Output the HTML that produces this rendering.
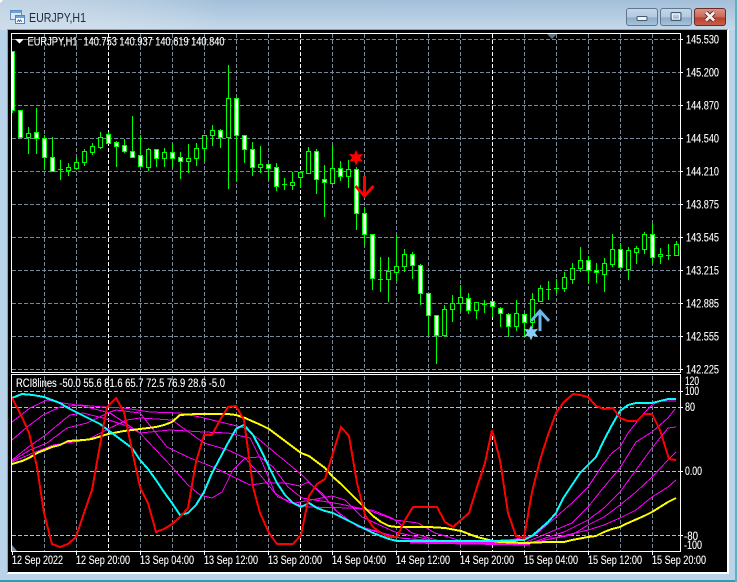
<!DOCTYPE html>
<html><head><meta charset="utf-8"><title>EURJPY,H1</title>
<style>
html,body{margin:0;padding:0;width:737px;height:582px;overflow:hidden;background:#b9d4ea}
svg{display:block}
text{font-family:"Liberation Sans",sans-serif;font-size:11.5px;fill:#fff;stroke:#fff;stroke-width:.12px}
</style></head><body>
<svg width="737" height="582" viewBox="0 0 737 582" xmlns="http://www.w3.org/2000/svg">
<defs>
<linearGradient id="tb" x1="0" y1="0" x2="0" y2="1"><stop offset="0" stop-color="#a3bfd9"/><stop offset="1" stop-color="#c4d8ea"/></linearGradient>
<linearGradient id="tb2" x1="0" y1="0" x2="1" y2="0"><stop offset="0" stop-color="#d4e0ea" stop-opacity=".6"/><stop offset=".3" stop-color="#fff" stop-opacity="0"/></linearGradient>
<linearGradient id="btn" x1="0" y1="0" x2="0" y2="1"><stop offset="0" stop-color="#c6d8e9"/><stop offset=".5" stop-color="#b2c9df"/><stop offset=".55" stop-color="#8fadc9"/><stop offset="1" stop-color="#a9c4dc"/></linearGradient>
<linearGradient id="cls" x1="0" y1="0" x2="0" y2="1"><stop offset="0" stop-color="#dc9486"/><stop offset=".5" stop-color="#c96a58"/><stop offset=".55" stop-color="#b8402c"/><stop offset="1" stop-color="#c9604c"/></linearGradient>
</defs>
<rect width="737" height="582" fill="#b9d4ea"/>
<rect width="737" height="30" fill="url(#tb)"/>
<rect width="737" height="30" fill="url(#tb2)"/>
<path d="M0 0h3L0 3z" fill="#fff"/>
<rect x="0" y="580" width="737" height="2" fill="#2f9fb0"/>
<rect x="735" y="0" width="2" height="582" fill="#5fb0c0"/>
<rect x="7" y="29" width="722" height="545" fill="#fff"/>
<rect x="7" y="29" width="721" height="1" fill="#8fa0b0"/>
<rect x="7" y="29" width="1" height="544" fill="#8fa0b0"/>
<rect x="8" y="30" width="719" height="542" fill="#000"/>

<!-- title icon -->
<g shape-rendering="crispEdges">
<rect x="10.5" y="10.5" width="11" height="9" fill="#dbe9f7" stroke="#5d8fc4"/><rect x="11" y="11" width="10" height="2" fill="#6ea3d8"/>
<rect x="15.5" y="15.5" width="9" height="8" fill="#fff" stroke="#4f86c0"/><rect x="16" y="16" width="8" height="2" fill="#6ea3d8"/>
</g>
<path d="M17 22l1.500-2 1 1.500 1-1.500 1.500 2" fill="none" stroke="#2f6fb0" stroke-width="1"/>
<text x="29" y="22" textLength="57" lengthAdjust="spacingAndGlyphs" style="font-size:12.5px;fill:#1c2a3c;stroke:none">EURJPY,H1</text>

<!-- window buttons -->
<rect x="626.500" y="8.500" width="31" height="17" rx="2.500" fill="url(#btn)" stroke="#5f7890"/>
<rect x="637" y="16.500" width="10" height="4" rx="1" fill="#f0f4f8" stroke="#44586c" stroke-width="1"/>
<rect x="660.500" y="8.500" width="31" height="17" rx="2.500" fill="url(#btn)" stroke="#5f7890"/>
<rect x="671" y="12.500" width="10" height="8" rx="1" fill="none" stroke="#44586c" stroke-width="1"/>
<rect x="672.500" y="14" width="7" height="5" fill="none" stroke="#f0f4f8" stroke-width="1"/>
<rect x="694.500" y="8.500" width="31" height="17" rx="2.500" fill="url(#cls)" stroke="#6a2a2a"/>
<path d="M706 12.500l8 8M714 12.500l-8 8" stroke="#4a2a2a" stroke-width="4.500"/>
<path d="M706 12.500l8 8M714 12.500l-8 8" stroke="#f4f0ee" stroke-width="2.800"/>

<!-- grid -->
<g fill="none" shape-rendering="crispEdges" stroke-width="1">
<path stroke="#778899" stroke-dasharray="4 2" d="M12 39.500H680M12 72.500H680M12 105.500H680M12 138.500H680M12 171.500H680M12 204.500H680M12 237.500H680M12 270.500H680M12 303.500H680M12 336.500H680M12 369.500H680"/>
<path stroke="#778899" stroke-dasharray="4 2" d="M44.500 34V372M76.500 34V372M140.500 34V372M172.500 34V372M204.500 34V372M236.500 34V372M268.500 34V372M332.500 34V372M364.500 34V372M396.500 34V372M428.500 34V372M460.500 34V372M524.500 34V372M556.500 34V372M588.500 34V372M620.500 34V372M652.500 34V372"/>
<path stroke="#fff" stroke-dasharray="4 2" d="M108.500 34V372M300.500 34V372M492.500 34V372M108.500 376V551M300.500 376V551M492.500 376V551"/>
<path stroke="#778899" stroke-dasharray="4 2" d="M44.500 376V551M76.500 376V551M140.500 376V551M172.500 376V551M204.500 376V551M236.500 376V551M268.500 376V551M332.500 376V551M364.500 376V551M396.500 376V551M428.500 376V551M460.500 376V551M524.500 376V551M556.500 376V551M588.500 376V551M620.500 376V551M652.500 376V551"/>
<path stroke="#b4bcc4" stroke-dasharray="4 2" d="M12 391.500H680M12 407.500H680M12 471.500H680M12 535.500H680"/>
</g>

<!-- candles -->
<g shape-rendering="crispEdges" stroke="#00ff00" stroke-width="1">
<path fill="none" d="M12.500 110V113M28.500 127V154M36.500 108V154M44.500 135V170M52.500 137V171M60.500 160V180M68.500 163V176M76.500 157V170M84.500 149V166M92.500 143V155M100.500 132V149M108.500 132V143M116.500 141V167M124.500 139V153M132.500 116V157M140.500 135V167M148.500 148V171M156.500 149V167M164.500 148V167M172.500 143V168M180.500 152V179M188.500 144V173M196.500 143V166M204.500 135V162M212.500 125V146M220.500 129V148M228.500 65V189M236.500 98V181M244.500 135V163M252.500 142V176M260.500 146V173M268.500 164V180M276.500 163V191M284.500 178V190M292.500 172V190M300.500 172V188M308.500 147V174M316.500 149V194M324.500 165V217M332.500 145V183M340.500 161V181M348.500 160V188M356.500 167V230M364.500 207V246M372.500 234V290M380.500 257V292M388.500 257V302M396.500 235V281M404.500 249V272M412.500 252V279M420.500 264V305M428.500 293V336M436.500 315V364M444.500 305V337M452.500 295V322M460.500 285V312M468.500 293V314M476.500 302V319M484.500 300V313M492.500 301V317M500.500 307V327M508.500 313V337M516.500 300V331M524.500 313V337M532.500 293V328M540.500 285V301M548.500 281V300M556.500 279V293M564.500 272V292M572.500 263V284M580.500 247V272M588.500 256V283M596.500 263V283M604.500 258V292M612.500 234V267M620.500 243V270M628.500 247V280M636.500 246V264M644.500 232V254M652.500 224V264M660.500 248V264M668.500 244V260M676.500 241V255"/>
<path fill="none" d="M58 169.500h5M282 184.500h5M378 279.500h5M482 304.500h5M546 289.500h5M554 288.500h5M666 255.500h5"/>
<path fill="#000" d="M26.500 133.500h4v4h-4zM66.500 167.500h4v3h-4zM74.500 162.500h4v6h-4zM82.500 151.500h4v11h-4zM90.500 146.500h4v6h-4zM98.500 137.500h4v10h-4zM146.500 149.500h4v18h-4zM162.500 152.500h4v6h-4zM186.500 158.500h4v3h-4zM194.500 148.500h4v10h-4zM202.500 135.500h4v13h-4zM210.500 130.500h4v5h-4zM226.500 98.500h4v39h-4zM258.500 164.500h4v3h-4zM290.500 182.500h4v3h-4zM298.500 172.500h4v5h-4zM306.500 151.500h4v22h-4zM330.500 168.500h4v15h-4zM346.500 169.500h4v7h-4zM386.500 271.500h4v8h-4zM394.500 266.500h4v6h-4zM402.500 254.500h4v12h-4zM442.500 309.500h4v26h-4zM450.500 303.500h4v6h-4zM458.500 297.500h4v6h-4zM474.500 302.500h4v8h-4zM514.500 313.500h4v13h-4zM530.500 299.500h4v23h-4zM538.500 288.500h4v13h-4zM562.500 277.500h4v11h-4zM570.500 268.500h4v11h-4zM578.500 260.500h4v8h-4zM602.500 263.500h4v11h-4zM610.500 249.500h4v15h-4zM626.500 250.500h4v19h-4zM634.500 248.500h4v4h-4zM642.500 234.500h4v15h-4zM658.500 254.500h4v2h-4zM674.500 244.500h4v11h-4z"/>
<path fill="#fff" d="M18.500 110.500h4v27h-4zM34.500 132.500h4v6h-4zM42.500 138.500h4v19h-4zM50.500 157.500h4v14h-4zM106.500 134.500h4v9h-4zM114.500 142.500h4v4h-4zM122.500 145.500h4v6h-4zM130.500 151.500h4v6h-4zM138.500 155.500h4v11h-4zM154.500 149.500h4v9h-4zM170.500 152.500h4v6h-4zM178.500 157.500h4v4h-4zM218.500 130.500h4v7h-4zM234.500 98.500h4v37h-4zM242.500 135.500h4v14h-4zM250.500 149.500h4v18h-4zM266.500 164.500h4v4h-4zM274.500 167.500h4v19h-4zM314.500 151.500h4v28h-4zM322.500 179.500h4v3h-4zM338.500 168.500h4v8h-4zM354.500 169.500h4v44h-4zM362.500 213.500h4v21h-4zM370.500 234.500h4v44h-4zM410.500 254.500h4v11h-4zM418.500 265.500h4v28h-4zM426.500 293.500h4v22h-4zM434.500 315.500h4v20h-4zM466.500 298.500h4v12h-4zM490.500 301.500h4v5h-4zM498.500 308.500h4v5h-4zM506.500 314.500h4v12h-4zM522.500 314.500h4v8h-4zM586.500 260.500h4v10h-4zM594.500 270.500h4v2h-4zM618.500 249.500h4v18h-4zM650.500 234.500h4v23h-4z"/>
<rect x="12" y="51" width="2" height="60" fill="#fff" stroke="none"/>
<path fill="none" d="M14.500 51V111M12 110.500h3M12 51.500h3"/>
</g>

<!-- top shift marker -->
<path d="M547 34h10l-5 5z" fill="#5c6f80"/>
<path d="M12 551v-6l5 6z" fill="#778899"/>

<!-- signals -->
<path d="M356 150l2 4.500 5-.800-3 4 3 4-5-.800-2 4.500-2-4.500-5 .800 3-4-3-4 5 .800z" fill="#f00"/>
<path d="M364.500 176V196M355.500 186l9 10 9-10" fill="none" stroke="#f00" stroke-width="3"/>
<path d="M531 325l2 4.500 5-.800-3 4 3 4-5-.800-2 4.500-2-4.500-5 .800 3-4-3-4 5 .800z" fill="#87cefa"/>
<path d="M540 331V311M531 321l9-10 9 10" fill="none" stroke="#6db6ec" stroke-width="3"/>

<!-- indicator: magenta -->
<g fill="none" stroke="#ff00ff" stroke-width="1" shape-rendering="crispEdges">
<polyline points="12,422 30,408 47,400 63,403 83,406 110,413 140,433 156,450 172,467 188,485 200,495 212,498 222,492 233,470 245,458 260,457 273,467 288,487 302,498 340,504 368,510 395,520 418,523 435,533 458,540 490,543 534,536 556,517 572,503 588,487 604,463 612,453 620,447 628,433 644,413 652,405 660,401 676,401"/>
<polyline points="12,440 27,427 43,415 60,407 80,405 103,407 124,408 150,412 180,413 200,417 245,428 262,442 302,475 325,498 342,517 362,527 400,538 440,541 524,543 548,533 572,523 588,507 604,487 620,468 636,442 652,432 668,418 675,409"/>
<polyline points="12,460 27,448 43,437 60,423 70,415 83,413 103,418 124,425 140,433 170,430 204,432 228,433 250,438 262,462 275,493 288,502 308,507 352,508 372,510 392,518 412,533 440,541 480,544 524,545 564,532 588,520 604,508 620,492 636,470 652,448 668,428 676,427"/>
<polyline points="12,461 30,450 47,443 67,428 87,423 110,412 116,410 140,413 167,447 190,458 213,467 250,485 265,483 285,483 300,486 308,482 322,493 335,510 358,527 400,538 450,543 524,544 572,535 588,525 604,517 620,505 636,492 652,477 668,460 676,452"/>
<polyline points="12,462 33,453 53,445 87,440 110,428 127,420 140,418 172,420 204,443 228,450 245,458 262,477 278,497 295,503 332,496 345,500 362,517 395,532 440,542 524,545 588,530 604,525 620,518 636,510 652,497 668,487 676,480"/>
<path d="M410 542L530 544" stroke-width="3"/>
</g>
<!-- indicator: yellow -->
<polyline fill="none" stroke="#ffff00" stroke-width="2" shape-rendering="crispEdges" points="12,464 22,461 29,458 37,453 52,447 60,445 68,441 84,440 92,439 108,434 124,431 140,429 156,427 164,425 172,422 180,415 196,414 212,414 228,414 236,415 245,418 261,425 269,429 277,435 285,441 293,447 301,453 309,456 317,462 325,468 333,477 341,484 349,492 357,500 365,508 373,516 381,522 389,526 397,527 429,527 445,528 461,531 477,537 493,541 500,542 524,543 548,542 564,542 572,540 588,537 596,536 604,532 612,529 620,527 628,523 644,516 652,512 660,507 668,502 676,498"/>
<!-- indicator: cyan -->
<polyline fill="none" stroke="#00ffff" stroke-width="2" shape-rendering="crispEdges" points="12,398 22,394 33,395 44,397 52,400 60,403 68,408 76,412 84,416 92,420 100,424 108,430 116,436 124,442 132,448 140,460 148,469 156,480 164,492 172,503 180,515 188,513 196,505 204,492 212,473 220,458 228,443 236,429 244,425 253,435 261,450 269,467 277,483 285,495 293,503 301,507 309,503 317,508 325,511 333,513 341,517 349,521 357,525 365,529 373,533 381,536 389,539 397,541 437,541 493,541 524,540 532,536 540,529 548,522 556,513 564,497 572,485 580,473 588,465 596,457 604,440 612,425 620,411 628,405 636,403 652,403 660,401 668,399 676,399"/>
<!-- indicator: red -->
<polyline fill="none" stroke="#ff0000" stroke-width="2" shape-rendering="crispEdges" points="12,398 22,417 29,433 37,467 44,513 52,544 60,547 68,544 76,537 84,513 92,490 100,445 107,407 116,398 124,412 132,450 140,487 148,503 156,532 164,529 172,524 180,517 188,508 196,462 204,435 212,435 220,420 228,407 236,406 244,420 253,487 260,513 269,533 277,544 293,544 301,535 309,496 317,484 325,479 333,453 341,427 349,436 357,483 365,515 373,527 381,533 389,537 397,537 405,520 413,507 437,507 445,522 453,527 469,513 477,487 485,463 492,430 500,460 508,513 516,536 524,538 532,492 540,460 548,435 556,413 564,402 573,394 580,395 588,397 596,406 604,409 613,408 620,418 628,421 637,421 644,414 652,414 660,430 669,459 676,460"/>

<!-- frames -->
<g fill="none" stroke="#fff" stroke-width="1" shape-rendering="crispEdges">
<path d="M11.500 372.500V33.500H680.500V372.500M11 372.500H681"/>
<path d="M11.500 551.500V374.500H680.500V551.500M11 551.500H681"/>
<path d="M680 39.500h3M680 72.500h3M680 105.500h3M680 138.500h3M680 171.500h3M680 204.500h3M680 237.500h3M680 270.500h3M680 303.500h3M680 336.500h3M680 369.500h3M680 391.500h3M680 407.500h3M680 471.500h3M680 535.500h3"/>
<path d="M12.500 552v3M76.500 552v3M140.500 552v3M204.500 552v3M268.500 552v3M332.500 552v3M396.500 552v3M460.500 552v3M524.500 552v3M588.500 552v3M652.500 552v3"/>
</g>
<path d="M15 39h9l-4.500 4.500z" fill="#fff"/>

<!-- text -->
<text x="27.500" y="45.500" textLength="50" lengthAdjust="spacingAndGlyphs">EURJPY,H1</text>
<text x="83.500" y="45.500" textLength="141" lengthAdjust="spacingAndGlyphs">140.753 140.937 140.619 140.840</text>
<text x="16" y="387" textLength="209" lengthAdjust="spacingAndGlyphs">RCI8lines -50.0 55.6 81.6 65.7 72.5 76.9 28.6 -5.0</text>

<g>
<text x="686" y="43.500" textLength="33" lengthAdjust="spacingAndGlyphs">145.530</text>
<text x="686" y="76.500" textLength="33" lengthAdjust="spacingAndGlyphs">145.200</text>
<text x="686" y="109.500" textLength="33" lengthAdjust="spacingAndGlyphs">144.870</text>
<text x="686" y="142.500" textLength="33" lengthAdjust="spacingAndGlyphs">144.540</text>
<text x="686" y="175.500" textLength="33" lengthAdjust="spacingAndGlyphs">144.210</text>
<text x="686" y="208.500" textLength="33" lengthAdjust="spacingAndGlyphs">143.875</text>
<text x="686" y="241.500" textLength="33" lengthAdjust="spacingAndGlyphs">143.545</text>
<text x="686" y="274.500" textLength="33" lengthAdjust="spacingAndGlyphs">143.215</text>
<text x="686" y="307.500" textLength="33" lengthAdjust="spacingAndGlyphs">142.885</text>
<text x="686" y="340.500" textLength="33" lengthAdjust="spacingAndGlyphs">142.555</text>
<text x="686" y="373.500" textLength="33" lengthAdjust="spacingAndGlyphs">142.225</text>
<text x="685" y="385" textLength="14" lengthAdjust="spacingAndGlyphs">120</text>
<text x="685" y="395" textLength="14" lengthAdjust="spacingAndGlyphs">100</text>
<text x="685" y="411" textLength="10" lengthAdjust="spacingAndGlyphs">80</text>
<text x="685" y="475" textLength="17" lengthAdjust="spacingAndGlyphs">0.00</text>
<text x="684" y="540" textLength="14" lengthAdjust="spacingAndGlyphs">-80</text>
<text x="684" y="549" textLength="18" lengthAdjust="spacingAndGlyphs">-100</text>
</g>
<g>
<text x="12" y="564" textLength="51" lengthAdjust="spacingAndGlyphs">12 Sep 2022</text>
<text x="76" y="564" textLength="54" lengthAdjust="spacingAndGlyphs">12 Sep 20:00</text>
<text x="140" y="564" textLength="54" lengthAdjust="spacingAndGlyphs">13 Sep 04:00</text>
<text x="204" y="564" textLength="54" lengthAdjust="spacingAndGlyphs">13 Sep 12:00</text>
<text x="268" y="564" textLength="54" lengthAdjust="spacingAndGlyphs">13 Sep 20:00</text>
<text x="332" y="564" textLength="54" lengthAdjust="spacingAndGlyphs">14 Sep 04:00</text>
<text x="396" y="564" textLength="54" lengthAdjust="spacingAndGlyphs">14 Sep 12:00</text>
<text x="460" y="564" textLength="54" lengthAdjust="spacingAndGlyphs">14 Sep 20:00</text>
<text x="524" y="564" textLength="54" lengthAdjust="spacingAndGlyphs">15 Sep 04:00</text>
<text x="588" y="564" textLength="54" lengthAdjust="spacingAndGlyphs">15 Sep 12:00</text>
<text x="652" y="564" textLength="54" lengthAdjust="spacingAndGlyphs">15 Sep 20:00</text>
</g>
</svg>
</body></html>
